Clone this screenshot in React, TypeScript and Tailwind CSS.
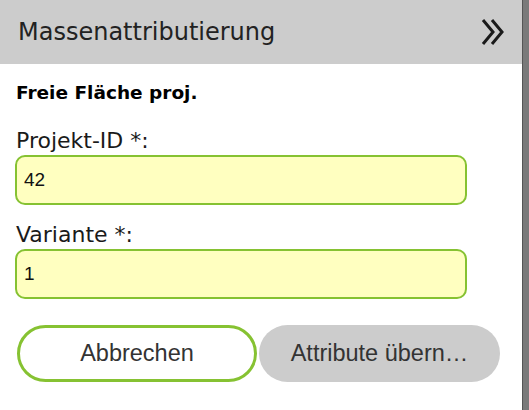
export default function App() {
  return (
    <div className="flex h-[410px] w-[529px] overflow-hidden bg-white">
      {/* panel */}
      <div className="flex h-full w-[522px] flex-col bg-white">
        <div className="flex h-[64px] items-center justify-between bg-[#cccccc] pl-[18px] pr-[17px]">
          <span className="text-[24px] leading-none text-[#222] [font-family:'DejaVu_Sans',sans-serif]">
            Massenattributierung
          </span>
          <svg width="25" height="30" viewBox="0 0 25 30" className="text-[#1a1a1a]">
            <path d="M3 3 L13 15 L3 27 M12 3 L22 15 L12 27" fill="none" stroke="currentColor" strokeWidth="3" />
          </svg>
        </div>

        <div className="flex flex-col px-[15px] pt-[18px] text-[#1a1a1a] [font-family:'DejaVu_Sans',sans-serif]">
          <div className="h-[22px] pl-[1px] text-[18.5px] font-bold leading-[22px] text-[#000]">Freie Fläche proj.</div>

          <label className="mt-[25px] h-[24px] pl-[1px] text-[22px] leading-[24px]">Projekt-ID *:</label>
          <input
            defaultValue="42"
            className="mt-[2px] h-[50px] w-[452px] rounded-[10px] border-2 border-[#86c232] bg-[#ffffc0] px-[7px] text-[19px] text-[#111] outline-none [font-family:'Liberation_Sans',sans-serif]"
          />

          <label className="mt-[18px] h-[24px] pl-[1px] text-[22px] leading-[24px]">Variante *:</label>
          <input
            defaultValue="1"
            className="mt-[2px] h-[50px] w-[452px] rounded-[10px] border-2 border-[#86c232] bg-[#ffffc0] px-[7px] text-[19px] text-[#111] outline-none [font-family:'Liberation_Sans',sans-serif]"
          />

          <div className="mt-[26px] flex gap-[2px] pl-[2px] [font-family:'Liberation_Sans',sans-serif]">
            <button className="h-[57px] w-[240px] rounded-full border-[3px] border-[#86c232] bg-white text-[23.5px] text-[#333]">
              Abbrechen
            </button>
            <button
              title="Attribute übernehmen"
              className="h-[57px] w-[241px] whitespace-nowrap rounded-full bg-[#cccccc] text-[23.5px] text-[#333]"
            >
              Attribute übern…
            </button>
          </div>
        </div>
      </div>

      {/* map edge behind the panel */}
      <div className="flex-1 border-l border-[#555] bg-[#7a7a7a]" />
    </div>
  )
}
